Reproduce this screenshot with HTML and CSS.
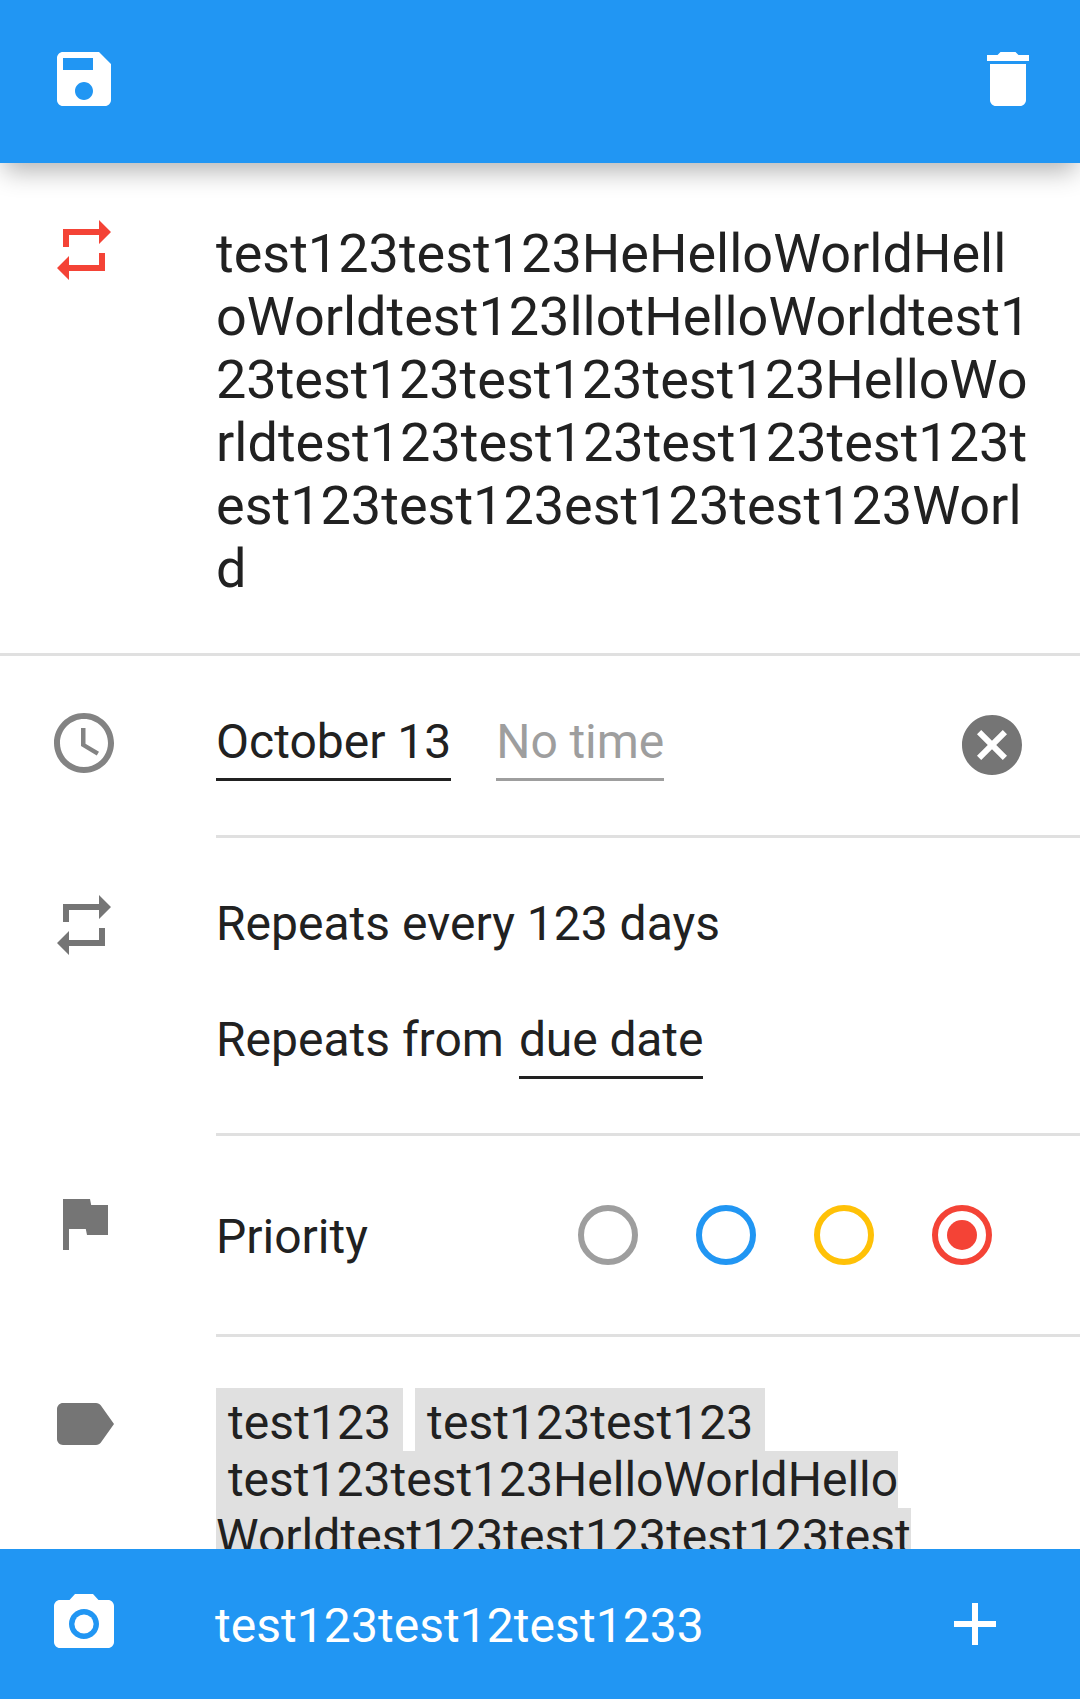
FILE: index.html
```html
<!DOCTYPE html>
<html lang="en">
<head>
<meta charset="utf-8">
<title>Edit task</title>
<link rel="stylesheet" href="styles.css">
</head>
<body>
<div class="app">
  <header class="toolbar">
    <svg class="icon" viewBox="0 0 24 24"><path d="M17 3H5c-1.11 0-2 .9-2 2v14c0 1.1.89 2 2 2h14c1.1 0 2-.9 2-2V7l-4-4zm-5 16c-1.66 0-3-1.34-3-3s1.34-3 3-3 3 1.34 3 3-1.34 3-3 3zm3-10H5V5h10v4z"/></svg>
    <svg class="icon" viewBox="0 0 24 24"><path d="M6 19c0 1.1.9 2 2 2h8c1.1 0 2-.9 2-2V7H6v12zM19 4h-3.5l-1-1h-5l-1 1H5v2h14V4z"/></svg>
  </header>

  <main class="content">
    <section class="row row-title">
      <svg class="icon icon-red" viewBox="0 0 24 24"><path d="M7 7h10v3l4-4-4-4v3H5v6h2V7zm10 10H7v-3l-4 4 4 4v-3h12v-6h-2v4z"/></svg>
      <div class="body title">test123test123HeHelloWorldHell<br>oWorldtest123llotHelloWorldtest1<br>23test123test123test123HelloWo<br>rldtest123test123test123test123t<br>est123test123est123test123Worl<br>d</div>
    </section>

    <section class="row row-date">
      <svg class="icon icon-clock" viewBox="0 0 24 24"><path d="M11.99 2C6.47 2 2 6.48 2 12s4.47 10 9.99 10C17.52 22 22 17.52 22 12S17.52 2 11.99 2zM12 20c-4.42 0-8-3.58-8-8s3.58-8 8-8 8 3.58 8 8-3.58 8-8 8zm.5-13H11v6l5.25 3.15.75-1.23-4.5-2.67z"/></svg>
      <div class="body date">
        <span class="field">October 13</span>
        <span class="field field-empty">No time</span>
        <svg class="icon clear" viewBox="0 0 24 24"><path d="M12 2C6.47 2 2 6.47 2 12s4.47 10 10 10 10-4.47 10-10S17.53 2 12 2zm5 13.59L15.59 17 12 13.41 8.41 17 7 15.59 10.59 12 7 8.41 8.41 7 12 10.59 15.59 7 17 8.41 13.41 12 17 15.59z"/></svg>
      </div>
    </section>

    <section class="row row-repeat">
      <svg class="icon" viewBox="0 0 24 24"><path d="M7 7h10v3l4-4-4-4v3H5v6h2V7zm10 10H7v-3l-4 4 4 4v-3h12v-6h-2v4z"/></svg>
      <div class="body repeat">
        <div>Repeats every 123 days</div>
        <div class="from"><span>Repeats from</span><span class="field field-due">due date</span></div>
      </div>
    </section>

    <section class="row row-priority">
      <svg class="icon" viewBox="0 0 24 24"><path d="M14.4 6L14 4H5v17h2v-7h5.6l.4 2h7V6z"/></svg>
      <div class="body priority">
        <span>Priority</span>
        <div class="radios">
          <span class="radio radio-none"></span>
          <span class="radio radio-low"></span>
          <span class="radio radio-medium"></span>
          <span class="radio radio-high checked"></span>
        </div>
      </div>
    </section>

    <section class="row row-tags">
      <svg class="icon" viewBox="0 0 24 24"><path d="M17.63 5.84C17.27 5.33 16.67 5 16 5L5 5.01C3.9 5.01 3 5.9 3 7v10c0 1.1.9 1.99 2 1.99L16 19c.67 0 1.27-.33 1.63-.84L22 12l-4.37-6.16z"/></svg>
      <div class="body tags">
        <div class="line line-first"><span class="tag">&nbsp;test123&nbsp;</span><span class="tag">&nbsp;test123test123&nbsp;</span></div>
        <div class="line"><span class="tag">&nbsp;test123test123HelloWorldHello</span></div>
        <div class="line line-last"><span class="tag">Worldtest123test123test123test</span></div>
      </div>
    </section>
  </main>

  <footer class="comment">
    <svg class="icon" viewBox="0 0 24 24"><circle cx="12" cy="12" r="3.2"/><path d="M9 2L7.17 4H4c-1.1 0-2 .9-2 2v12c0 1.1.9 2 2 2h16c1.1 0 2-.9 2-2V6c0-1.1-.9-2-2-2h-3.17L15 2H9zm3 15c-2.76 0-5-2.24-5-5s2.24-5 5-5 5 2.24 5 5-2.24 5-5 5z"/></svg>
    <span class="comment-text">test123test12test1233</span>
    <svg class="icon" viewBox="0 0 24 24"><path d="M19 13h-6v6h-2v-6H5v-2h6V5h2v6h6v2z"/></svg>
  </footer>
</div>
</body>
</html>
```
FILE: styles.css
```css
* {
  box-sizing: border-box;
}

body {
  margin: 0;
  background: #fff;
  color: #212121;
  font: 48px/56px Roboto, sans-serif;
}

.app {
  display: flex;
  flex-direction: column;
  width: 1080px;
  height: 1699px;
  overflow: hidden;
}

.icon {
  display: block;
  flex: none;
  width: 72px;
  height: 72px;
  fill: #757575;
}

.icon-red {
  fill: #f44336;
}

.icon-clock {
  fill: #838383;
}

.toolbar {
  display: flex;
  flex: none;
  justify-content: space-between;
  height: 163px;
  padding: 43px 36px 0 48px;
  background: #2196f3;
  box-shadow: 0 12px 24px -4px rgba(0, 0, 0, 0.3);
}

.toolbar .icon,
.comment .icon {
  fill: #fff;
}

.content {
  flex: 1;
  min-height: 0;
  overflow: hidden;
}

.row {
  display: flex;
  gap: 96px;
  padding-left: 48px;
}

.row .icon {
  margin-top: 51px;
}

.body {
  flex: 1;
  border-bottom: 3px solid #e0e0e0;
  white-space: nowrap;
}

.row-title {
  height: 493px;
  border-bottom: 3px solid #e0e0e0;
}

.title {
  padding-top: 59px;
  border-bottom: 0;
  font-size: 54px;
  line-height: 63px;
}

.row-date {
  height: 182px;
}

.date {
  display: flex;
  align-items: flex-start;
  gap: 45px;
  padding-right: 52px;
}

.field {
  height: 67px;
  border-bottom: 3px solid #212121;
}

.date .field {
  margin-top: 58px;
}

.date .field-empty {
  border-color: #9e9e9e;
  color: #9e9e9e;
  letter-spacing: -0.1px;
}

.field-due {
  letter-spacing: -0.1px;
}

.date .clear {
  margin-top: 53px;
  margin-left: auto;
}

.row-repeat {
  height: 298px;
}

.repeat {
  display: flex;
  flex-direction: column;
  gap: 60px;
  padding-top: 58px;
}

.from {
  display: flex;
  gap: 15px;
}

.row-priority {
  height: 201px;
}

.priority {
  display: flex;
  align-items: flex-start;
  justify-content: space-between;
  padding: 73px 88px 0 0;
}

.radios {
  display: flex;
  gap: 58px;
  margin-top: -4px;
}

.radio {
  display: grid;
  place-items: center;
  width: 60px;
  height: 60px;
  border: 6px solid currentColor;
  border-radius: 50%;
}

.checked::before {
  content: "";
  width: 30px;
  height: 30px;
  border-radius: 50%;
  background: currentColor;
}

.radio-none {
  color: #9e9e9e;
}

.radio-low {
  color: #2196f3;
}

.radio-medium {
  color: #ffc107;
}

.radio-high {
  color: #f44336;
}

.tags {
  padding-top: 51px;
  border-bottom: 0;
}

.line {
  display: flex;
  gap: 12px;
  line-height: 57px;
}

.line-first {
  letter-spacing: 0.08px;
}

.line-last {
  letter-spacing: 0.04px;
}

.tag {
  background: #e0e0e0;
}

.line-first .tag {
  padding-top: 6px;
}

.comment {
  display: flex;
  flex: none;
  height: 150px;
  padding: 39px 69px 0 48px;
  background: #2196f3;
}

.comment-text {
  flex: 1;
  margin-left: 95px;
  padding-top: 10px;
  color: #fff;
  letter-spacing: 0.05px;
}
```
